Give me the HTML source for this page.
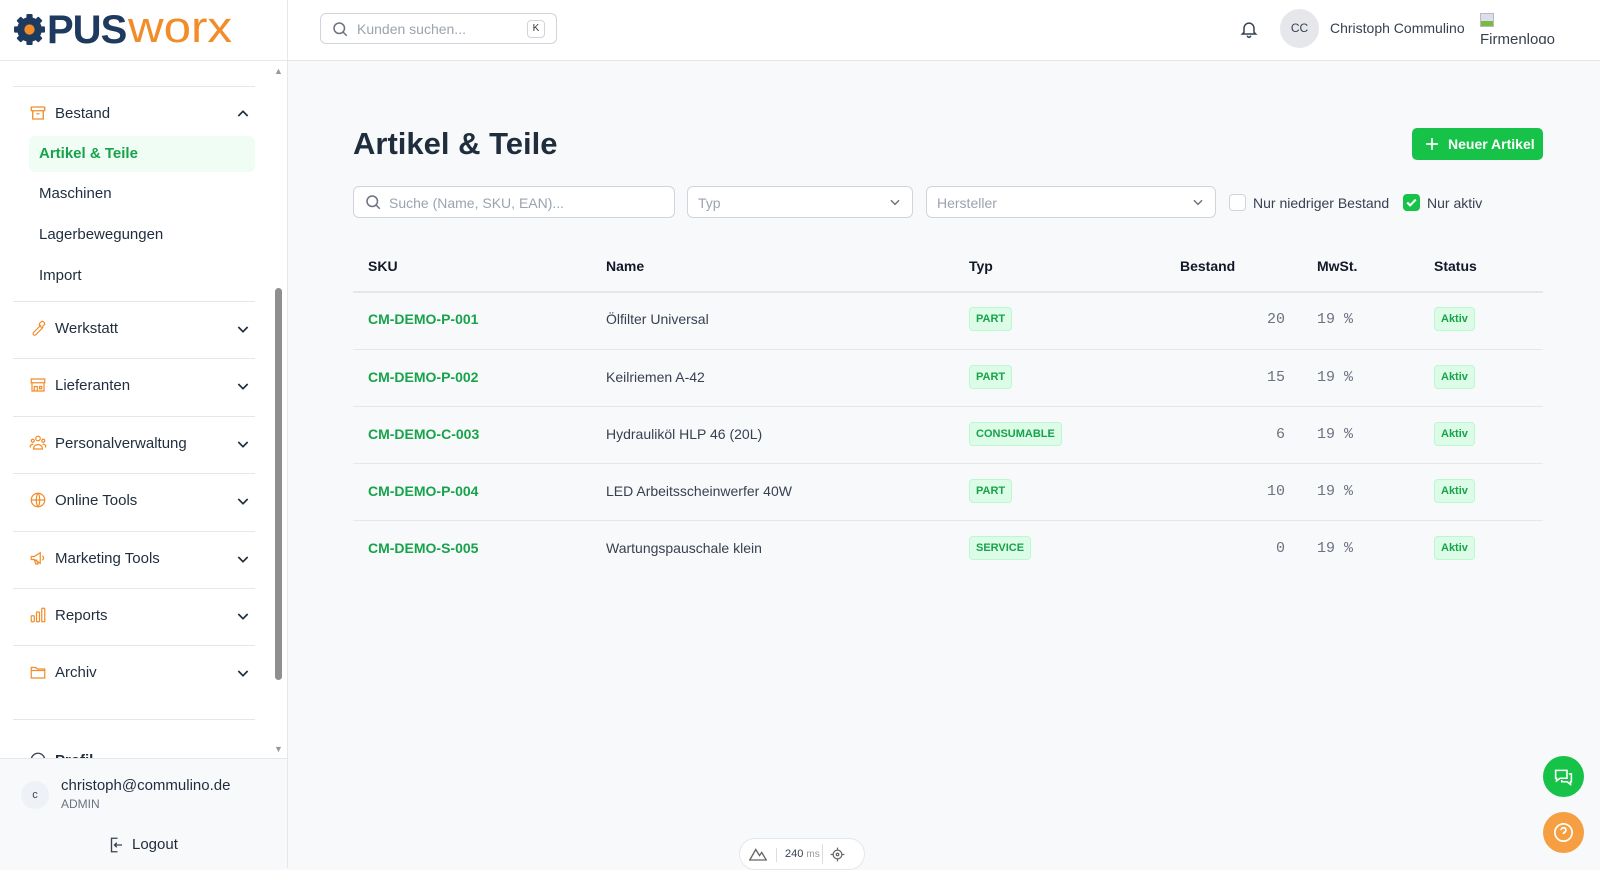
<!DOCTYPE html>
<html><head><meta charset="utf-8"><style>
*{box-sizing:border-box;margin:0;padding:0}
body{width:1600px;height:868px;overflow:hidden;font-family:"Liberation Sans",sans-serif;background:#f8f9fb;color:#1f2937;position:relative}
.a{position:absolute}
.side{left:0;top:0;width:288px;height:868px;background:#fff;border-right:1px solid #e5e7eb}
.nav{left:13px;width:242px;height:57px;border-top:1px solid #e5e7eb;font-size:15px;color:#1f2d3d}
.nav .t{position:absolute;left:42px;top:18px}
.nav svg.i{position:absolute;left:16px;top:17px}
.nav svg.c{position:absolute;right:4px;top:19px}
.sub{left:39px;font-size:15px;color:#1f2d3d}
.hdr{left:288px;top:0;width:1312px;height:61px;background:#fff;border-bottom:1px solid #e5e7eb}
.inp{background:#fff;border:1px solid #d1d5db;border-radius:6px;height:32px;font-size:14px;color:#9ca3af}
.th{top:258px;font-size:14px;font-weight:bold;color:#111827}
.row{left:353px;width:1190px;height:57px;border-top:1px solid #e5e7eb;font-size:14px}
.row span{position:absolute;top:19px}
.sku{left:15px;color:#16a34a;font-weight:bold}
.nm{left:253px;color:#374151}
.badge{background:#dcfce7;border:1px solid #bbf7d0;color:#16a34a;font-size:11px;font-weight:bold;border-radius:4px;padding:5px 6px;top:15px!important}
.num{font-family:"Liberation Mono",monospace;color:#6b7280;font-size:15px}
</style></head><body>
<div class="a side">
  <svg class="a" style="left:13px;top:13px" width="33" height="33" viewBox="0 0 32 32"><g fill="#1e3a5f"><circle cx="16" cy="16" r="12"/><rect x="13" y="1" width="6" height="30" rx="1"/><rect x="1" y="13" width="30" height="6" rx="1"/><rect x="13" y="1" width="6" height="30" rx="1" transform="rotate(45 16 16)"/><rect x="13" y="1" width="6" height="30" rx="1" transform="rotate(-45 16 16)"/></g><circle cx="16" cy="16" r="5" fill="#f28c28"/></svg>
  <div class="a" style="left:47px;top:8px;font-size:40px;font-weight:bold;line-height:44px;color:#1e3a5f;letter-spacing:-1px">PUS</div>
  <div class="a" style="left:128px;top:6px;font-size:44px;line-height:44px;color:#f28c28;transform:scaleX(1.12);transform-origin:left">worx</div>
  <div class="a" style="left:0;top:60px;width:288px;border-top:1px solid #e5e7eb"></div>
  <div class="a" style="left:274px;top:66px;font-size:9px;color:#999">▲</div>
  <div class="a" style="left:274px;top:744px;font-size:9px;color:#999">▼</div>
  <div class="a" style="left:275px;top:288px;width:7px;height:392px;background:#8f8f8f;border-radius:4px"></div>
  <div class="a nav" style="top:86px;height:216px">
    <svg class="i" width="18" height="18" viewBox="0 0 24 24" fill="none" stroke="#f28c28" stroke-width="1.8"><rect x="3" y="4" width="18" height="5" rx="1"/><path d="M5 9v11h14V9M10 13h4"/></svg>
    <span class="t">Bestand</span>
    <svg class="c" width="16" height="16" viewBox="0 0 24 24" fill="none" stroke="#1f2d3d" stroke-width="2.5"><path d="M5 15l7-7 7 7"/></svg>
  </div>
  <div class="a" style="left:29px;top:136px;width:226px;height:36px;background:#f0fdf4;border-radius:6px"></div>
  <div class="a sub" style="top:145px;color:#16a34a;font-weight:bold">Artikel &amp; Teile</div>
  <div class="a sub" style="top:185px">Maschinen</div>
  <div class="a sub" style="top:226px">Lagerbewegungen</div>
  <div class="a sub" style="top:267px">Import</div>
  <div class="a nav" style="top:301px"><svg class="i" width="18" height="18" viewBox="0 0 24 24" fill="none" stroke="#f28c28" stroke-width="1.6"><path d="M14 6a4 4 0 0 0 5 5l-10 10a2 2 0 0 1-3-3L16 8M14 6l3-3a4 4 0 0 1 4 4l-3 3"/></svg><span class="t">Werkstatt</span><svg class="c" width="16" height="16" viewBox="0 0 24 24" fill="none" stroke="#1f2d3d" stroke-width="2.5"><path d="M5 9l7 7 7-7"/></svg></div>
  <div class="a nav" style="top:358px"><svg class="i" width="18" height="18" viewBox="0 0 24 24" fill="none" stroke="#f28c28" stroke-width="1.6"><path d="M3 4h18v5H3zM4 9v11h16V9M7 20v-6h4v6M14 14h3v3h-3z"/></svg><span class="t">Lieferanten</span><svg class="c" width="16" height="16" viewBox="0 0 24 24" fill="none" stroke="#1f2d3d" stroke-width="2.5"><path d="M5 9l7 7 7-7"/></svg></div>
  <div class="a nav" style="top:416px"><svg class="i" width="18" height="18" viewBox="0 0 24 24" fill="none" stroke="#f28c28" stroke-width="1.6"><circle cx="12" cy="6" r="3"/><circle cx="5" cy="9" r="2"/><circle cx="19" cy="9" r="2"/><path d="M6 20a6 6 0 0 1 12 0zM2 18a3 3 0 0 1 4-4M22 18a3 3 0 0 0-4-4"/></svg><span class="t">Personalverwaltung</span><svg class="c" width="16" height="16" viewBox="0 0 24 24" fill="none" stroke="#1f2d3d" stroke-width="2.5"><path d="M5 9l7 7 7-7"/></svg></div>
  <div class="a nav" style="top:473px"><svg class="i" width="18" height="18" viewBox="0 0 24 24" fill="none" stroke="#f28c28" stroke-width="1.6"><circle cx="12" cy="12" r="9"/><path d="M3 12h18M12 3c3 3 3 15 0 18M12 3c-3 3-3 15 0 18"/></svg><span class="t">Online Tools</span><svg class="c" width="16" height="16" viewBox="0 0 24 24" fill="none" stroke="#1f2d3d" stroke-width="2.5"><path d="M5 9l7 7 7-7"/></svg></div>
  <div class="a nav" style="top:531px"><svg class="i" width="18" height="18" viewBox="0 0 24 24" fill="none" stroke="#f28c28" stroke-width="1.6"><path d="M3 10v4h4l8 5V5L7 10zM7 14l2 6h3l-2-6M18 9a4 4 0 0 1 0 6"/></svg><span class="t">Marketing Tools</span><svg class="c" width="16" height="16" viewBox="0 0 24 24" fill="none" stroke="#1f2d3d" stroke-width="2.5"><path d="M5 9l7 7 7-7"/></svg></div>
  <div class="a nav" style="top:588px"><svg class="i" width="18" height="18" viewBox="0 0 24 24" fill="none" stroke="#f28c28" stroke-width="1.6"><rect x="3" y="13" width="4" height="8" rx="1"/><rect x="10" y="8" width="4" height="13" rx="1"/><rect x="17" y="3" width="4" height="18" rx="1"/></svg><span class="t">Reports</span><svg class="c" width="16" height="16" viewBox="0 0 24 24" fill="none" stroke="#1f2d3d" stroke-width="2.5"><path d="M5 9l7 7 7-7"/></svg></div>
  <div class="a nav" style="top:645px"><svg class="i" width="18" height="18" viewBox="0 0 24 24" fill="none" stroke="#f28c28" stroke-width="1.6"><path d="M3 6h6l2 2h10v12H3z"/><path d="M3 10h18"/></svg><span class="t">Archiv</span><svg class="c" width="16" height="16" viewBox="0 0 24 24" fill="none" stroke="#1f2d3d" stroke-width="2.5"><path d="M5 9l7 7 7-7"/></svg></div>
  <div class="a" style="left:13px;top:719px;width:242px;border-top:1px solid #e5e7eb"></div>
  <svg class="a" style="left:29px;top:751px" width="18" height="18" viewBox="0 0 24 24" fill="none" stroke="#374151" stroke-width="1.8"><circle cx="12" cy="12" r="9"/></svg>
  <div class="a" style="left:55px;top:752px;font-size:15px;color:#1f2d3d;font-weight:bold">Profil</div>
  <div class="a" style="left:0;top:758px;width:287px;height:110px;background:#f8f9fb;border-top:1px solid #e5e7eb"></div>
  <div class="a" style="left:21px;top:781px;width:28px;height:28px;border-radius:50%;background:#eef1f5;font-size:11px;color:#374151;text-align:center;line-height:28px">c</div>
  <div class="a" style="left:61px;top:777px;font-size:15px;color:#1f2d3d">christoph@commulino.de</div>
  <div class="a" style="left:61px;top:797px;font-size:12px;color:#6b7280">ADMIN</div>
  <svg class="a" style="left:107px;top:836px" width="18" height="18" viewBox="0 0 24 24" fill="none" stroke="#374151" stroke-width="1.8"><path d="M14 3H6v18h8M20 12H10M13 9l-3 3 3 3"/></svg>
  <div class="a" style="left:132px;top:836px;font-size:15px;color:#1f2d3d">Logout</div>
</div>
<div class="a hdr">
  <div class="a inp" style="left:32px;top:13px;width:237px;height:31px">
    <svg class="a" style="left:10px;top:6px" width="18" height="18" viewBox="0 0 24 24" fill="none" stroke="#6b7280" stroke-width="2"><circle cx="11" cy="11" r="7"/><path d="M16 16l5 5"/></svg>
    <span class="a" style="left:36px;top:7px">Kunden suchen...</span>
    <span class="a" style="left:206px;top:6px;width:18px;height:18px;border:1px solid #d1d5db;border-radius:4px;font-size:10px;color:#333;text-align:center;line-height:16px">K</span>
  </div>
  <svg class="a" style="left:951px;top:19px" width="20" height="20" viewBox="0 0 24 24" fill="none" stroke="#374151" stroke-width="1.8"><path d="M6 16V11a6 6 0 0 1 12 0v5l2 2H4zM10 20a2 2 0 0 0 4 0"/></svg>
  <div class="a" style="left:992px;top:9px;width:39px;height:39px;border-radius:50%;background:#e5e7eb;font-size:12px;color:#374151;text-align:center;line-height:39px">CC</div>
  <div class="a" style="left:1042px;top:20px;font-size:14px;color:#374151">Christoph Commulino</div>
  <div class="a" style="left:1192px;top:13px;width:14px;height:14px;border:1px solid #bbb;background:linear-gradient(#dde 60%,#7b4 60%)"></div>
  <div class="a" style="left:1192px;top:30px;width:90px;height:14px;overflow:hidden;font-size:15px;color:#374151;line-height:20px">Firmenlogo</div>
</div>
<div class="a" style="left:353px;top:126px;font-size:31px;font-weight:bold;color:#1f2d3d">Artikel &amp; Teile</div>
<div class="a" style="left:1412px;top:128px;width:131px;height:32px;background:#16c248;border-radius:5px;color:#fff;font-size:14px;font-weight:bold;line-height:32px">
  <svg class="a" style="left:12px;top:8px" width="16" height="16" viewBox="0 0 24 24" fill="none" stroke="#fff" stroke-width="2.5"><path d="M12 3v18M3 12h18"/></svg><span class="a" style="left:36px">Neuer Artikel</span></div>
<div class="a inp" style="left:353px;top:186px;width:322px">
  <svg class="a" style="left:10px;top:6px" width="18" height="18" viewBox="0 0 24 24" fill="none" stroke="#6b7280" stroke-width="2"><circle cx="11" cy="11" r="7"/><path d="M16 16l5 5"/></svg>
  <span class="a" style="left:35px;top:8px">Suche (Name, SKU, EAN)...</span></div>
<div class="a inp" style="left:687px;top:186px;width:226px"><span class="a" style="left:10px;top:8px">Typ</span>
  <svg class="a" style="right:10px;top:8px" width="14" height="14" viewBox="0 0 24 24" fill="none" stroke="#6b7280" stroke-width="2.5"><path d="M5 9l7 7 7-7"/></svg></div>
<div class="a inp" style="left:926px;top:186px;width:290px"><span class="a" style="left:10px;top:8px">Hersteller</span>
  <svg class="a" style="right:10px;top:8px" width="14" height="14" viewBox="0 0 24 24" fill="none" stroke="#6b7280" stroke-width="2.5"><path d="M5 9l7 7 7-7"/></svg></div>
<div class="a" style="left:1229px;top:194px;width:17px;height:17px;border:1px solid #d1d5db;border-radius:4px;background:#fff"></div>
<div class="a" style="left:1253px;top:195px;font-size:14px;color:#374151">Nur niedriger Bestand</div>
<div class="a" style="left:1403px;top:194px;width:17px;height:17px;border-radius:4px;background:#16c248"><svg width="17" height="17" viewBox="0 0 24 24" fill="none" stroke="#fff" stroke-width="3"><path d="M6 12l4 4 8-8"/></svg></div>
<div class="a" style="left:1427px;top:195px;font-size:14px;color:#374151">Nur aktiv</div>
<div class="a th" style="left:368px">SKU</div>
<div class="a th" style="left:606px">Name</div>
<div class="a th" style="left:969px">Typ</div>
<div class="a th" style="left:1180px">Bestand</div>
<div class="a th" style="left:1317px">MwSt.</div>
<div class="a th" style="left:1434px">Status</div>
<div class="a" style="left:353px;top:291px;width:1190px;border-top:2px solid #e5e7eb"></div>
<div class="a row" style="top:292px;border-top:none"><span class="sku">CM-DEMO-P-001</span><span class="nm">Ölfilter Universal</span><span class="badge" style="left:616px">PART</span><span class="num" style="right:258px">20</span><span class="num" style="left:964px">19 %</span><span class="badge" style="left:1081px">Aktiv</span></div>
<div class="a row" style="top:349px"><span class="sku">CM-DEMO-P-002</span><span class="nm">Keilriemen A-42</span><span class="badge" style="left:616px">PART</span><span class="num" style="right:258px">15</span><span class="num" style="left:964px">19 %</span><span class="badge" style="left:1081px">Aktiv</span></div>
<div class="a row" style="top:406px"><span class="sku">CM-DEMO-C-003</span><span class="nm">Hydrauliköl HLP 46 (20L)</span><span class="badge" style="left:616px">CONSUMABLE</span><span class="num" style="right:258px">6</span><span class="num" style="left:964px">19 %</span><span class="badge" style="left:1081px">Aktiv</span></div>
<div class="a row" style="top:463px"><span class="sku">CM-DEMO-P-004</span><span class="nm">LED Arbeitsscheinwerfer 40W</span><span class="badge" style="left:616px">PART</span><span class="num" style="right:258px">10</span><span class="num" style="left:964px">19 %</span><span class="badge" style="left:1081px">Aktiv</span></div>
<div class="a row" style="top:520px"><span class="sku">CM-DEMO-S-005</span><span class="nm">Wartungspauschale klein</span><span class="badge" style="left:616px">SERVICE</span><span class="num" style="right:258px">0</span><span class="num" style="left:964px">19 %</span><span class="badge" style="left:1081px">Aktiv</span></div>
<div class="a" style="left:739px;top:838px;width:126px;height:32px;background:#fff;border:1px solid #e5e7eb;border-radius:16px;font-size:11px;color:#374151">
  <svg class="a" style="left:9px;top:8px" width="18" height="14" viewBox="0 0 24 18" fill="none" stroke="#666" stroke-width="1.8"><path d="M1 17L9 3l5 8 3-4 6 10z"/></svg>
  <span class="a" style="left:36px;top:9px;border-left:1px solid #ddd;padding-left:8px;height:14px">240 <span style="color:#999;font-size:10px">ms</span></span>
  <span class="a" style="left:82px;top:5px;height:20px;border-left:1px solid #ddd"></span>
  <svg class="a" style="left:90px;top:8px" width="15" height="15" viewBox="0 0 24 24" fill="none" stroke="#666" stroke-width="2"><circle cx="12" cy="12" r="7"/><circle cx="12" cy="12" r="2"/><path d="M12 1v4M12 19v4M1 12h4M19 12h4"/></svg></div>
<div class="a" style="left:1543px;top:756px;width:41px;height:41px;border-radius:50%;background:#16c248">
  <svg class="a" style="left:10px;top:10px" width="21" height="21" viewBox="0 0 24 24" fill="none" stroke="#fff" stroke-width="1.8"><path d="M3 5h13v9H8l-4 3v-3H3zM18 9h3v9h-1v3l-4-3h-6v-2"/></svg></div>
<div class="a" style="left:1543px;top:812px;width:41px;height:41px;border-radius:50%;background:#f59e42">
  <svg class="a" style="left:9px;top:9px" width="23" height="23" viewBox="0 0 24 24" fill="none" stroke="#fff" stroke-width="1.8"><circle cx="12" cy="12" r="9"/><path d="M9.5 9.5a2.5 2.5 0 1 1 3.5 2.3c-.7.3-1 .9-1 1.7M12 17h.01"/></svg></div>
</body></html>
